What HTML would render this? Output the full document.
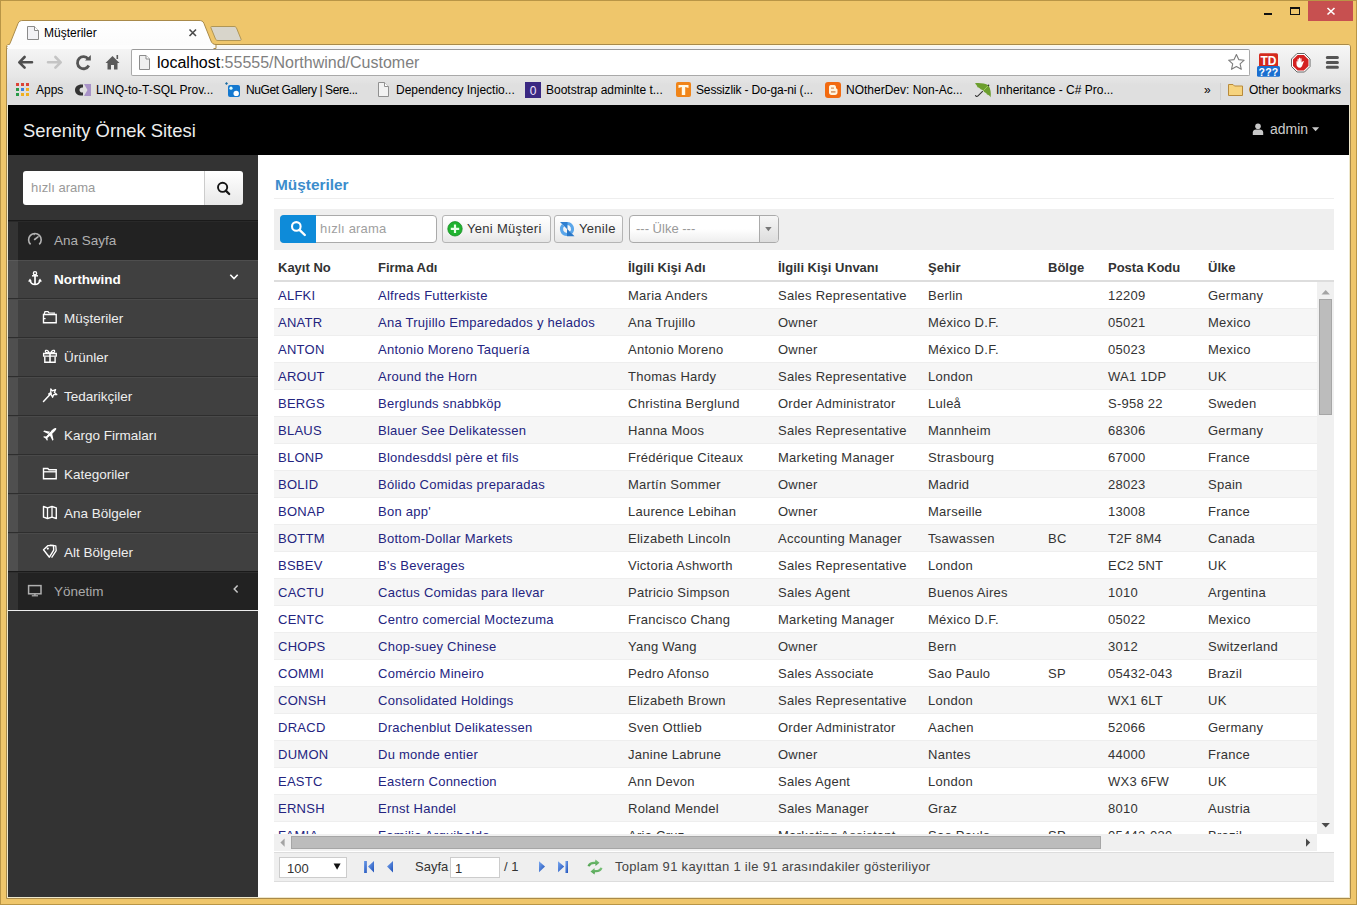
<!DOCTYPE html>
<html><head><meta charset="utf-8"><title>Müşteriler</title>
<style>
*{box-sizing:border-box}
html,body{margin:0;padding:0}
body{width:1357px;height:905px;position:relative;overflow:hidden;background:#EFC66B;font-family:"Liberation Sans",sans-serif;}
.abs{position:absolute}
#outer{position:absolute;left:0;top:0;width:1357px;height:905px;border:1px solid #b99546;}
/* window controls */
#closebtn{position:absolute;left:1308px;top:1px;width:45px;height:20px;background:#C75050;}
/* tabs */
#chrome{position:absolute;left:6px;top:44px;width:1345px;height:855px;border:1px solid #a98a4a;border-radius:3px 3px 0 0;background:#efe8cc;}
#toolbar{position:absolute;left:7px;top:45px;width:1343px;height:60px;background:linear-gradient(#fffbe8 0,#fffbe8 1px,#f6f6f6 1px,#f2f2f2 8px,#e6e6e6 32px,#dfdfdf 40px,#dfdfdf);border-radius:2px 2px 0 0;}
#addr{position:absolute;left:131px;top:49px;width:1119px;height:27px;background:#fff;border:1px solid #a9a9a9;border-top-color:#9a9a9a;border-radius:2px;}
.bm{position:absolute;top:83px;font-size:12px;color:#000;white-space:nowrap;line-height:15px}
/* page */
#page{position:absolute;left:8px;top:105px;width:1341px;height:792px;background:#fff;overflow:hidden}
#header{position:absolute;left:8px;top:105px;width:1341px;height:50px;background:#000}
#sidebar{position:absolute;left:8px;top:155px;width:250px;height:742px;background:#333}
.mi{position:absolute;left:8px;width:250px;height:39px;}
.mi .strip{position:absolute;left:0;top:0;width:10px;height:39px}
.mi .bg{position:absolute;left:10px;top:0;width:240px;height:39px}
.mi .t{position:absolute;top:13px;font-size:13.5px;line-height:16px;white-space:nowrap}
.grp .strip{background:#4f4f4f}
.grp .bg{background:#404040}
.grp .ln{position:absolute;left:0;top:0;width:250px;height:1px;background:#2e2e2e}
.grp .ln2{position:absolute;left:0;top:1px;width:250px;height:1px;background:#4a4a4a}
.top1 .strip{background:#333}
.top1 .bg{background:#222}
/* grid */
#grid{position:absolute;left:274px;top:282px;width:1043px;height:552px;overflow:hidden;}
.row{position:absolute;left:0;width:1043px;height:27px;background:#fff;border-bottom:1px solid #eee}
.row.odd{background:#f6f6f6}
.c{position:absolute;top:6px;font-size:13px;letter-spacing:0.26px;color:#333;white-space:nowrap;line-height:15px}
.lnk{color:#24247f}
.h{position:absolute;top:10px;font-size:13px;font-weight:bold;color:#333;white-space:nowrap;line-height:15px}
</style></head><body>
<div id="outer"></div>
<div id="closebtn"></div>
<div id="chrome"></div>
<div id="toolbar"></div>
<div id="addr"></div>
<svg class="abs" style="left:0;top:0" width="1357" height="105" viewBox="0 0 1357 105">
 <defs>
  <linearGradient id="tabg" x1="0" y1="0" x2="0" y2="1"><stop offset="0" stop-color="#ffffff"/><stop offset="1" stop-color="#fbfbfb"/></linearGradient>
 </defs>
 <!-- active tab -->
 <path d="M6.5 47.5 C9 45 10 44 11 41 L18 23.5 C19 21 20.5 20.5 23 20.5 L199 20.5 C201.5 20.5 203 21 204 23.5 L211 41 C212 43.5 213.5 44.5 216 44.5 L216 48.5 L6.5 48.5 Z" fill="url(#tabg)" stroke="#a98a4a" stroke-width="1"/>
 <rect x="7.5" y="45" width="206" height="4" fill="#fdfdfd"/>
 <!-- new tab button -->
 <path d="M211.5 26.5 L234 26.5 C235.5 26.5 236 27 236.5 28 L241 39 C241.3 40 241 40.5 240 40.5 L218 40.5 C216.5 40.5 216 40 215.5 39 L211 28 C210.7 27 211 26.5 211.5 26.5 Z" fill="#d8d5cb" stroke="#b09656" stroke-width="1"/>
 <!-- tab doc icon -->
 <path d="M27.5 26.5 L34.5 26.5 L38.5 30.5 L38.5 39.5 L27.5 39.5 Z" fill="#f2f2f5" stroke="#8a8a8a" stroke-width="1"/>
 <path d="M34.5 26.5 L34.5 30.5 L38.5 30.5" fill="#fff" stroke="#8a8a8a" stroke-width="1"/>
 <!-- tab close -->
 <path d="M189.5 29.5 L196 36 M196 29.5 L189.5 36" stroke="#4a4a4a" stroke-width="1.6"/>
 <!-- window controls -->
 <rect x="1264" y="13" width="8" height="2" fill="#111"/>
 <rect x="1290.5" y="7.5" width="9" height="7" fill="none" stroke="#111" stroke-width="1"/>
 <rect x="1290" y="7" width="10" height="2" fill="#111"/>
 <path d="M1327.5 8 L1334.5 14.5 M1334.5 8 L1327.5 14.5" stroke="#fff" stroke-width="1.6"/>
 <!-- back / forward -->
 <path d="M32 62.3 L19.5 62.3 M24.6 57 L19.3 62.3 L24.6 67.6" fill="none" stroke="#4e4e4e" stroke-width="2.6" stroke-linecap="round" stroke-linejoin="round"/>
 <path d="M48 62.3 L60.5 62.3 M55.4 57 L60.7 62.3 L55.4 67.6" fill="none" stroke="#c4c4c4" stroke-width="2.6" stroke-linecap="round" stroke-linejoin="round"/>
 <!-- reload -->
 <path d="M88.2 59 A6 6 0 1 0 88.8 65.5" fill="none" stroke="#555" stroke-width="2.8"/>
 <path d="M85 60.5 L90.8 60.5 L90.8 55 Z" fill="#555"/>
 <!-- home -->
 <path d="M105.5 63 L112.5 56 L119.5 63 Z" fill="#5a5a5a"/>
 <path d="M107.5 62 L117.5 62 L117.5 69.5 L114 69.5 L114 65 L111 65 L111 69.5 L107.5 69.5 Z" fill="#5a5a5a"/>
 <rect x="116.5" y="55" width="1.6" height="4" fill="#5a5a5a"/>
 <!-- address doc icon -->
 <path d="M139.5 55.5 L146 55.5 L149.5 59 L149.5 69.5 L139.5 69.5 Z" fill="#f0f0f0" stroke="#8c8c8c" stroke-width="1"/>
 <path d="M146 55.5 L146 59 L149.5 59" fill="#fff" stroke="#8c8c8c" stroke-width="1"/>
 <!-- star -->
 <path d="M1236.4 54.6 L1238.7 59.6 L1244.2 60.2 L1240.1 63.9 L1241.3 69.3 L1236.4 66.5 L1231.5 69.3 L1232.7 63.9 L1228.6 60.2 L1234.1 59.6 Z" fill="#fff" stroke="#7c7c7c" stroke-width="1.1" stroke-linejoin="round"/>
 <!-- TD extension -->
 <rect x="1259" y="53.2" width="19" height="14" rx="1.5" fill="#d42a1e"/>
 <text x="1268.5" y="64.8" font-family="Liberation Sans" font-weight="bold" font-size="12" fill="#fff" text-anchor="middle">TD</text>
 <rect x="1257" y="66" width="23" height="10.8" rx="1.5" fill="#1a6fd0"/>
 <text x="1268.5" y="75.5" font-family="Liberation Sans" font-weight="bold" font-size="10.5" fill="#fff" text-anchor="middle" letter-spacing="0.3">???</text>
 <!-- adblock -->
 <path d="M1297 53.5 L1304.5 53.5 L1310 59 L1310 66.5 L1304.5 72 L1297 72 L1291.5 66.5 L1291.5 59 Z" fill="#fff" stroke="#666" stroke-width="1"/>
 <path d="M1297.6 55 L1303.9 55 L1308.5 59.6 L1308.5 65.9 L1303.9 70.5 L1297.6 70.5 L1293 65.9 L1293 59.6 Z" fill="#d42020"/>
 <path d="M1298.5 67.5 C1297 66.8 1296.5 65.5 1296.5 64 L1296.5 61.8 C1296.5 61.2 1297.3 61.2 1297.4 61.8 L1297.5 62.8 L1297.6 59.2 C1297.7 58.6 1298.6 58.6 1298.7 59.2 L1298.8 62 L1299 58.2 C1299.1 57.6 1300 57.6 1300.1 58.2 L1300.2 62 L1300.4 58.8 C1300.5 58.2 1301.4 58.2 1301.5 58.8 L1301.6 62.5 L1302.8 61.2 C1303.3 60.8 1304 61.2 1303.7 61.8 L1302.5 64.8 C1302 66.5 1301.2 67.6 1300 67.8 Z" fill="#fff"/>
 <!-- menu -->
 <path d="M1327.3 57.4 L1337.4 57.4 M1327.3 62.4 L1337.4 62.4 M1327.3 67.3 L1337.4 67.3" stroke="#555" stroke-width="3" stroke-linecap="round"/>
 <!-- bookmarks icons -->
 <g>
  <rect x="16" y="83" width="3" height="3" fill="#dc4437"/><rect x="21" y="83" width="3" height="3" fill="#dc4437"/><rect x="26" y="83" width="3" height="3" fill="#dc4437"/>
  <rect x="16" y="88" width="3" height="3" fill="#2a9a48"/><rect x="21" y="88" width="3" height="3" fill="#3b82e0"/><rect x="26" y="88" width="3" height="3" fill="#f0b020"/>
  <rect x="16" y="93" width="3" height="3" fill="#2a9a48"/><rect x="21" y="93" width="3" height="3" fill="#f0b020"/><rect x="26" y="93" width="3" height="3" fill="#f0b020"/>
 </g>
 <path d="M83 84.5 C78 84 75 86.5 75 90 C75 93.5 78 96 83 95.5 L83 92.5 C81 92.8 79.5 91.8 79.5 90 C79.5 88.2 81 87.2 83 87.5 Z" fill="#333"/>
 <path d="M84 84 L91 84 L91 96 L84 96 L87.5 90 Z" fill="#a993c8"/>
 <rect x="228" y="85" width="12" height="12" rx="2" fill="#1478cf"/>
 <circle cx="231" cy="88.2" r="1.6" fill="#dff"/>
 <circle cx="236.2" cy="93.4" r="2.7" fill="#fff"/>
 <path d="M226.5 82 L228 83.5 L226.5 85 L225 83.5 Z" fill="#1a6aa0"/>
 <path d="M378.5 82.5 L384.5 82.5 L388.5 86.5 L388.5 96.5 L378.5 96.5 Z" fill="#f2f2f2" stroke="#909090" stroke-width="1"/>
 <path d="M384.5 82.5 L384.5 86.5 L388.5 86.5" fill="#fff" stroke="#909090" stroke-width="1"/>
 <rect x="525" y="82" width="16" height="16" fill="#3a2882"/>
 <text x="533" y="94.5" font-family="Liberation Sans" font-size="12" fill="#f0e6ff" text-anchor="middle">0</text>
 <rect x="676" y="82" width="15" height="15" rx="2" fill="#f08418"/>
 <path d="M678.5 85 L688.5 85 L688.5 88 L685.2 87 L685.2 95 L681.8 95 L681.8 87 L678.5 88 Z" fill="#fff9e6"/>
 <rect x="825" y="82" width="16" height="16" rx="3" fill="#f26a10"/>
 <path d="M829 87 C829 85.5 830 85 831.5 85 L834 85 C835.5 85 836 86 836 87.5 L836 88.5 C837 88.5 837.5 89 837.5 90 L837.5 92.5 C837.5 94 836.5 95 835 95 L831.5 95 C830 95 829 94 829 92.5 Z" fill="#fff5e0"/>
 <rect x="831" y="87.6" width="3" height="1" fill="#c87a40"/><rect x="831" y="91.3" width="4.5" height="1.2" fill="#c87a40"/>
 <path d="M975 83.2 C979 82.6 985 83.2 988.5 85.4 C990.5 88.5 991.3 93 990.6 97.2 C989.5 95.5 988.2 95 987 94.6 C986.5 93 985.5 92.5 984.2 92 C983.5 90.5 982.5 90 981 89.6 C980 88 978.8 87.5 977.5 87.2 C977 85.5 976 84.5 975 83.2 Z" fill="#6c9e2e"/>
 <path d="M988.5 85.4 L983.5 90.5" stroke="#9fd060" stroke-width="0.9"/>
 <circle cx="988.5" cy="85.4" r="0.8" fill="#333"/>
 <path d="M982.8 91.2 L978 95.8 C977 96.8 975.6 96.6 975.4 95.2" fill="none" stroke="#333" stroke-width="1.1"/>
 <!-- bookmarks separator + folder -->
 <rect x="1220" y="83" width="1" height="17" fill="#cfcfcf"/>
 <path d="M1228.5 84.5 L1233 84.5 L1234.5 86 L1242.5 86 L1242.5 95.5 L1228.5 95.5 Z" fill="#f6d37e" stroke="#b88a3a" stroke-width="1"/>
</svg>
<div class="abs" style="left:157px;top:53px;font-size:16px;line-height:19px;color:#808080;white-space:nowrap"><span style="color:#000">localhost</span>:55555/Northwind/Customer</div>

<div class="abs" style="left:44px;top:26px;font-size:12px;line-height:15px;color:#000;white-space:nowrap">Müşteriler</div>
<div class="bm" style="left:36px">Apps</div>
<div class="bm" style="left:96px">LINQ-to-T-SQL Prov...</div>
<div class="bm" style="left:246px;letter-spacing:-0.42px">NuGet Gallery | Sere...</div>
<div class="bm" style="left:396px">Dependency Injectio...</div>
<div class="bm" style="left:546px">Bootstrap adminlte t...</div>
<div class="bm" style="left:696px;letter-spacing:-0.15px">Sessizlik - Do-ga-ni (...</div>
<div class="bm" style="left:846px">NOtherDev: Non-Ac...</div>
<div class="bm" style="left:996px">Inheritance - C# Pro...</div>
<div class="bm" style="left:1204px">»</div>
<div class="bm" style="left:1249px">Other bookmarks</div>

<div id="page"></div>
<div id="header"></div>
<div class="abs" style="left:23px;top:120px;font-size:18.4px;line-height:21px;color:#eee;white-space:nowrap">Serenity Örnek Sitesi</div>
<div class="abs" style="left:1270px;top:121px;font-size:14px;line-height:16px;color:#ccc;white-space:nowrap">admin</div>

<div id="sidebar"></div>
<div class="abs" style="left:23px;top:171px;width:182px;height:34px;background:#fff;border-radius:3px 0 0 3px"></div>
<div class="abs" style="left:204px;top:171px;width:39px;height:34px;background:linear-gradient(#fff,#e8e8e8);border-left:1px solid #ccc;border-radius:0 3px 3px 0"></div>
<div class="abs" style="left:31px;top:180px;font-size:13px;line-height:16px;color:#999;white-space:nowrap">hızlı arama</div>

<div class="mi top1" style="top:220px"><div class="strip"></div><div class="bg"></div><div class="abs" style="left:0;top:0;width:250px;height:1px;background:#1a1a1a"></div><div class="abs" style="left:0;top:1px;width:250px;height:1px;background:#292929"></div><span class="t" style="left:46px;color:#b0b0b0">Ana Sayfa</span></div>
<div class="mi grp" style="top:259px"><div class="strip"></div><div class="bg"></div><div class="ln" style="background:linear-gradient(90deg,#333 10px,#222 10px)"></div><div class="ln2" style="background:linear-gradient(90deg,#5a5a5a 10px,#4e4e4e 10px)"></div><span class="t" style="left:46px;color:#fff;font-weight:bold">Northwind</span></div>
<div class="mi grp" style="top:298px"><div class="strip"></div><div class="bg"></div><div class="ln"></div><div class="ln2"></div><span class="t" style="left:56px;color:#eee">Müşteriler</span></div>
<div class="mi grp" style="top:337px"><div class="strip"></div><div class="bg"></div><div class="ln"></div><div class="ln2"></div><span class="t" style="left:56px;color:#eee">Ürünler</span></div>
<div class="mi grp" style="top:376px"><div class="strip"></div><div class="bg"></div><div class="ln"></div><div class="ln2"></div><span class="t" style="left:56px;color:#eee">Tedarikçiler</span></div>
<div class="mi grp" style="top:415px"><div class="strip"></div><div class="bg"></div><div class="ln"></div><div class="ln2"></div><span class="t" style="left:56px;color:#eee">Kargo Firmaları</span></div>
<div class="mi grp" style="top:454px"><div class="strip"></div><div class="bg"></div><div class="ln"></div><div class="ln2"></div><span class="t" style="left:56px;color:#eee">Kategoriler</span></div>
<div class="mi grp" style="top:493px"><div class="strip"></div><div class="bg"></div><div class="ln"></div><div class="ln2"></div><span class="t" style="left:56px;color:#eee">Ana Bölgeler</span></div>
<div class="mi grp" style="top:532px"><div class="strip"></div><div class="bg"></div><div class="ln"></div><div class="ln2"></div><span class="t" style="left:56px;color:#eee">Alt Bölgeler</span></div>
<div class="mi top1" style="top:571px"><div class="strip"></div><div class="bg"></div><div class="abs" style="left:0;top:0;width:250px;height:1px;background:#1a1a1a"></div><div class="abs" style="left:0;top:1px;width:250px;height:1px;background:#2e2e2e"></div><span class="t" style="left:46px;color:#aaa">Yönetim</span></div>
<div class="abs" style="left:8px;top:610px;width:250px;height:1px;background:#eee"></div>
<svg class="abs" style="left:0;top:105px" width="260" height="520" viewBox="0 105 260 520">
 <!-- sidebar search icon -->
 <circle cx="222.6" cy="187.3" r="4.6" fill="none" stroke="#151515" stroke-width="1.9"/>
 <path d="M225.8 190.6 L229.2 194" stroke="#151515" stroke-width="2.2" stroke-linecap="round"/>
 <!-- dashboard -->
 <path d="M30.6 244.4 A6.3 6.3 0 1 1 39.2 244.4" fill="none" stroke="#b4b4b4" stroke-width="1.6"/>
 <path d="M34.6 239.5 L38 236.8" stroke="#b4b4b4" stroke-width="1.6" stroke-linecap="round"/>
 <rect x="33.6" y="233.6" width="1.2" height="1.6" fill="#b4b4b4"/>
 <!-- anchor -->
 <circle cx="35" cy="273.2" r="1.6" fill="none" stroke="#fff" stroke-width="1.4"/>
 <path d="M32 275.8 L38 275.8" stroke="#fff" stroke-width="1.5"/>
 <path d="M35 275 L35 284.3" stroke="#fff" stroke-width="1.7"/>
 <path d="M29.5 280 C30.5 283 32.5 284.5 35 284.5 C37.5 284.5 39.5 283 40.5 280" fill="none" stroke="#fff" stroke-width="1.5"/>
 <path d="M28 281.5 L30 278.4 L32 281.5 Z M38 281.5 L40 278.4 L42 281.5 Z" fill="#fff"/>
 <!-- chevron down -->
 <path d="M230.3 274.8 L234 278.5 L237.7 274.8" fill="none" stroke="#fff" stroke-width="1.6"/>
 <!-- folder-open-o (Musteriler) -->
 <path d="M43.5 314.5 L43.5 322.8 L56.2 322.8 L56.2 314.5 Z" fill="none" stroke="#fff" stroke-width="1.4"/>
 <path d="M44.2 314 L45 311.6 L48 311.6 L49 312.8 L55 313.2" fill="none" stroke="#fff" stroke-width="1.3"/>
 <rect x="44" y="318" width="1.6" height="1.2" fill="#fff"/>
 <!-- gift -->
 <path d="M43.6 353.5 L56.3 353.5 L56.3 356.2 L43.6 356.2 Z" fill="none" stroke="#fff" stroke-width="1.3"/>
 <path d="M44.8 356.5 L44.8 362.2 L55.1 362.2 L55.1 356.5" fill="none" stroke="#fff" stroke-width="1.4"/>
 <rect x="49.2" y="353" width="1.6" height="9.5" fill="#fff"/>
 <path d="M49.5 353 C48 350 45.5 349.5 45.3 351.2 C45.2 352.5 47.5 353 49.5 353 M50.5 353 C52 350 54.5 349.5 54.7 351.2 C54.8 352.5 52.5 353 50.5 353" fill="none" stroke="#fff" stroke-width="1.2"/>
 <!-- magic wand -->
 <path d="M43.5 401.5 L51.2 393.2" stroke="#fff" stroke-width="1.5" stroke-linecap="round"/>
 <path d="M50.8 388.8 L52.5 390.8 L55.6 389.6 L54.4 392.6 L56.8 394.6 L53.6 394.7 L52.6 397.3 L51.2 394.6 L48.6 394 L50.8 392.5 Z" fill="none" stroke="#fff" stroke-width="1.3" stroke-linejoin="round"/>
 <!-- plane -->
 <path d="M56.2 428.2 C55 427.7 53.8 428.3 52.6 429.5 L50.2 431.8 L44.2 430.5 L43.2 431.5 L48.3 434 L46 436.6 L44 436.2 L43.2 437 L45.6 438.4 L47 440.8 L47.8 440 L47.4 438 L50 435.7 L52.5 440.8 L53.5 439.8 L52.2 433.8 L54.5 431.4 C55.7 430.2 56.7 429.2 56.2 428.2 Z" fill="#fff"/>
 <path d="M46 436 L51.5 430.5" stroke="#404040" stroke-width="0.9" stroke-dasharray="1 1"/>
 <!-- folder-o (Kategoriler) -->
 <path d="M43.5 468.5 L47.8 468.5 L49 469.8 L56.2 469.8 L56.2 478.7 L43.5 478.7 Z" fill="none" stroke="#fff" stroke-width="1.4"/>
 <path d="M43.8 471.8 L56 471.8" stroke="#fff" stroke-width="1.3"/>
 <!-- map-o -->
 <path d="M43.5 506.5 L47.5 507.8 L52 506.5 L56.3 507.8 L56.3 518.5 L52 517.2 L47.5 518.5 L43.5 517.2 Z" fill="none" stroke="#fff" stroke-width="1.4" stroke-linejoin="round"/>
 <path d="M47.5 508 L47.5 518.2 M52 506.8 L52 517" stroke="#fff" stroke-width="1.3"/>
 <!-- tags / tag -->
 <path d="M43.5 549.8 L48 545.6 L53.5 545.4 L53.7 550.2 L49.4 557.2 Z" fill="none" stroke="#fff" stroke-width="1.4" stroke-linejoin="round"/>
 <path d="M49.8 545.2 L55.8 545.8 L56.2 550.6 L51.6 557.6" fill="none" stroke="#fff" stroke-width="1.3" stroke-linejoin="round"/>
 <circle cx="47.8" cy="548.6" r="1.1" fill="#fff"/>
 <!-- desktop -->
 <rect x="28.6" y="585.6" width="12.4" height="8.2" fill="none" stroke="#b0b0b0" stroke-width="1.5"/>
 <rect x="34.2" y="593.8" width="1.4" height="1.8" fill="#b0b0b0"/>
 <rect x="31.8" y="595.2" width="6.2" height="1.2" fill="#b0b0b0"/>
 <!-- chevron left -->
 <path d="M237.6 585.4 L234.2 588.9 L237.6 592.4" fill="none" stroke="#c8c8c8" stroke-width="1.5"/>
</svg>
<svg class="abs" style="left:1245px;top:118px" width="80" height="22" viewBox="1245 118 80 22">
 <circle cx="1258" cy="126.2" r="2.8" fill="#c8c8c8"/>
 <path d="M1252.8 135 L1252.8 132.6 C1252.8 130.5 1254.3 129.6 1256 129.6 L1260 129.6 C1261.7 129.6 1263.2 130.5 1263.2 132.6 L1263.2 135 Z" fill="#c8c8c8"/>
 <path d="M1312 127.3 L1319.2 127.3 L1315.6 131.3 Z" fill="#c8c8c8"/>
</svg>

<!-- content -->
<div class="abs" style="left:275px;top:176px;font-size:15.4px;font-weight:bold;line-height:18px;color:#3c8dcc;white-space:nowrap">Müşteriler</div>
<div class="abs" style="left:274px;top:198px;width:1060px;height:1px;background:#eee"></div>
<div class="abs" style="left:274px;top:209px;width:1060px;height:41px;background:#efefef"></div>

<!-- quick search -->
<div class="abs" style="left:280px;top:215px;width:157px;height:28px;background:#fff;border:1px solid #aaa;border-radius:4px"></div>
<div class="abs" style="left:280px;top:215px;width:36px;height:28px;background:#0e8bd9;border-radius:4px 0 0 4px"></div>
<div class="abs" style="left:320px;top:221px;font-size:13px;line-height:16px;color:#a0a0a0;white-space:nowrap;letter-spacing:0.2px">hızlı arama</div>
<!-- buttons -->
<div class="abs" style="left:442px;top:215px;width:109px;height:28px;background:linear-gradient(#fff,#f3f3f3 60%,#e6e6e6);border:1px solid #b5b5b5;border-radius:3px"></div>
<div class="abs" style="left:467px;top:221px;font-size:13px;line-height:16px;color:#333;white-space:nowrap;letter-spacing:0.3px">Yeni Müşteri</div>
<div class="abs" style="left:554px;top:215px;width:69px;height:28px;background:linear-gradient(#fff,#f3f3f3 60%,#e6e6e6);border:1px solid #b5b5b5;border-radius:3px"></div>
<div class="abs" style="left:579px;top:221px;font-size:13px;line-height:16px;color:#333;white-space:nowrap;letter-spacing:0.3px">Yenile</div>
<div class="abs" style="left:629px;top:215px;width:150px;height:28px;background:linear-gradient(#fff,#fff 50%,#eee);border:1px solid #aaa;border-radius:4px"></div>
<div class="abs" style="left:759px;top:216px;width:19px;height:26px;background:linear-gradient(#f6f6f6,#ddd);border-left:1px solid #aaa;border-radius:0 3px 3px 0"></div>
<div class="abs" style="left:636px;top:221px;font-size:13px;line-height:16px;color:#999;white-space:nowrap">--- Ülke ---</div>
<svg class="abs" style="left:270px;top:210px" width="520" height="40" viewBox="270 210 520 40">
 <circle cx="296.3" cy="226.4" r="4.3" fill="none" stroke="#fff" stroke-width="2.1"/>
 <path d="M299.5 229.8 L304.8 235" stroke="#fff" stroke-width="2.4" stroke-linecap="round"/>
 <circle cx="455" cy="228.8" r="7.2" fill="#1fb32f"/>
 <circle cx="455" cy="228.8" r="7.2" fill="none" stroke="#178a25" stroke-width="0.8"/>
 <path d="M455 224.5 L455 233 M450.8 228.8 L459.2 228.8" stroke="#eaffea" stroke-width="2.2"/>
 <path d="M563.1 225.1 A5.5 5.5 0 0 0 567 234.5" fill="none" stroke="#5aa6ea" stroke-width="3"/>
 <path d="M570.9 232.9 A5.5 5.5 0 0 0 567 223.5" fill="none" stroke="#5aa6ea" stroke-width="3"/>
 <path d="M560 222 L567.5 222 L567.5 229.5 Z" fill="#2f7fd0"/>
 <path d="M574.5 236.2 L567 236.2 L567 228.7 Z" fill="#2a78c8"/>
 <path d="M765.2 227 L771.6 227 L768.4 231.2 Z" fill="#777"/>
</svg>
<div class="abs" style="left:274px;top:250px;width:1060px;height:30px"><span class="h" style="left:4px">Kayıt No</span><span class="h" style="left:104px">Firma Adı</span><span class="h" style="left:354px">İlgili Kişi Adı</span><span class="h" style="left:504px">İlgili Kişi Unvanı</span><span class="h" style="left:654px">Şehir</span><span class="h" style="left:774px">Bölge</span><span class="h" style="left:834px">Posta Kodu</span><span class="h" style="left:934px">Ülke</span></div>
<div class="abs" style="left:274px;top:280px;width:1060px;height:2px;background:#ddd"></div>
<div id="grid">
<div class="row" style="top:0px"><span class="c lnk" style="left:4px">ALFKI</span><span class="c lnk" style="left:104px">Alfreds Futterkiste</span><span class="c" style="left:354px">Maria Anders</span><span class="c" style="left:504px">Sales Representative</span><span class="c" style="left:654px">Berlin</span><span class="c" style="left:834px">12209</span><span class="c" style="left:934px">Germany</span></div>
<div class="row odd" style="top:27px"><span class="c lnk" style="left:4px">ANATR</span><span class="c lnk" style="left:104px">Ana Trujillo Emparedados y helados</span><span class="c" style="left:354px">Ana Trujillo</span><span class="c" style="left:504px">Owner</span><span class="c" style="left:654px">México D.F.</span><span class="c" style="left:834px">05021</span><span class="c" style="left:934px">Mexico</span></div>
<div class="row" style="top:54px"><span class="c lnk" style="left:4px">ANTON</span><span class="c lnk" style="left:104px">Antonio Moreno Taquería</span><span class="c" style="left:354px">Antonio Moreno</span><span class="c" style="left:504px">Owner</span><span class="c" style="left:654px">México D.F.</span><span class="c" style="left:834px">05023</span><span class="c" style="left:934px">Mexico</span></div>
<div class="row odd" style="top:81px"><span class="c lnk" style="left:4px">AROUT</span><span class="c lnk" style="left:104px">Around the Horn</span><span class="c" style="left:354px">Thomas Hardy</span><span class="c" style="left:504px">Sales Representative</span><span class="c" style="left:654px">London</span><span class="c" style="left:834px">WA1 1DP</span><span class="c" style="left:934px">UK</span></div>
<div class="row" style="top:108px"><span class="c lnk" style="left:4px">BERGS</span><span class="c lnk" style="left:104px">Berglunds snabbköp</span><span class="c" style="left:354px">Christina Berglund</span><span class="c" style="left:504px">Order Administrator</span><span class="c" style="left:654px">Luleå</span><span class="c" style="left:834px">S-958 22</span><span class="c" style="left:934px">Sweden</span></div>
<div class="row odd" style="top:135px"><span class="c lnk" style="left:4px">BLAUS</span><span class="c lnk" style="left:104px">Blauer See Delikatessen</span><span class="c" style="left:354px">Hanna Moos</span><span class="c" style="left:504px">Sales Representative</span><span class="c" style="left:654px">Mannheim</span><span class="c" style="left:834px">68306</span><span class="c" style="left:934px">Germany</span></div>
<div class="row" style="top:162px"><span class="c lnk" style="left:4px">BLONP</span><span class="c lnk" style="left:104px">Blondesddsl père et fils</span><span class="c" style="left:354px">Frédérique Citeaux</span><span class="c" style="left:504px">Marketing Manager</span><span class="c" style="left:654px">Strasbourg</span><span class="c" style="left:834px">67000</span><span class="c" style="left:934px">France</span></div>
<div class="row odd" style="top:189px"><span class="c lnk" style="left:4px">BOLID</span><span class="c lnk" style="left:104px">Bólido Comidas preparadas</span><span class="c" style="left:354px">Martín Sommer</span><span class="c" style="left:504px">Owner</span><span class="c" style="left:654px">Madrid</span><span class="c" style="left:834px">28023</span><span class="c" style="left:934px">Spain</span></div>
<div class="row" style="top:216px"><span class="c lnk" style="left:4px">BONAP</span><span class="c lnk" style="left:104px">Bon app&#39;</span><span class="c" style="left:354px">Laurence Lebihan</span><span class="c" style="left:504px">Owner</span><span class="c" style="left:654px">Marseille</span><span class="c" style="left:834px">13008</span><span class="c" style="left:934px">France</span></div>
<div class="row odd" style="top:243px"><span class="c lnk" style="left:4px">BOTTM</span><span class="c lnk" style="left:104px">Bottom-Dollar Markets</span><span class="c" style="left:354px">Elizabeth Lincoln</span><span class="c" style="left:504px">Accounting Manager</span><span class="c" style="left:654px">Tsawassen</span><span class="c" style="left:774px">BC</span><span class="c" style="left:834px">T2F 8M4</span><span class="c" style="left:934px">Canada</span></div>
<div class="row" style="top:270px"><span class="c lnk" style="left:4px">BSBEV</span><span class="c lnk" style="left:104px">B&#39;s Beverages</span><span class="c" style="left:354px">Victoria Ashworth</span><span class="c" style="left:504px">Sales Representative</span><span class="c" style="left:654px">London</span><span class="c" style="left:834px">EC2 5NT</span><span class="c" style="left:934px">UK</span></div>
<div class="row odd" style="top:297px"><span class="c lnk" style="left:4px">CACTU</span><span class="c lnk" style="left:104px">Cactus Comidas para llevar</span><span class="c" style="left:354px">Patricio Simpson</span><span class="c" style="left:504px">Sales Agent</span><span class="c" style="left:654px">Buenos Aires</span><span class="c" style="left:834px">1010</span><span class="c" style="left:934px">Argentina</span></div>
<div class="row" style="top:324px"><span class="c lnk" style="left:4px">CENTC</span><span class="c lnk" style="left:104px">Centro comercial Moctezuma</span><span class="c" style="left:354px">Francisco Chang</span><span class="c" style="left:504px">Marketing Manager</span><span class="c" style="left:654px">México D.F.</span><span class="c" style="left:834px">05022</span><span class="c" style="left:934px">Mexico</span></div>
<div class="row odd" style="top:351px"><span class="c lnk" style="left:4px">CHOPS</span><span class="c lnk" style="left:104px">Chop-suey Chinese</span><span class="c" style="left:354px">Yang Wang</span><span class="c" style="left:504px">Owner</span><span class="c" style="left:654px">Bern</span><span class="c" style="left:834px">3012</span><span class="c" style="left:934px">Switzerland</span></div>
<div class="row" style="top:378px"><span class="c lnk" style="left:4px">COMMI</span><span class="c lnk" style="left:104px">Comércio Mineiro</span><span class="c" style="left:354px">Pedro Afonso</span><span class="c" style="left:504px">Sales Associate</span><span class="c" style="left:654px">Sao Paulo</span><span class="c" style="left:774px">SP</span><span class="c" style="left:834px">05432-043</span><span class="c" style="left:934px">Brazil</span></div>
<div class="row odd" style="top:405px"><span class="c lnk" style="left:4px">CONSH</span><span class="c lnk" style="left:104px">Consolidated Holdings</span><span class="c" style="left:354px">Elizabeth Brown</span><span class="c" style="left:504px">Sales Representative</span><span class="c" style="left:654px">London</span><span class="c" style="left:834px">WX1 6LT</span><span class="c" style="left:934px">UK</span></div>
<div class="row" style="top:432px"><span class="c lnk" style="left:4px">DRACD</span><span class="c lnk" style="left:104px">Drachenblut Delikatessen</span><span class="c" style="left:354px">Sven Ottlieb</span><span class="c" style="left:504px">Order Administrator</span><span class="c" style="left:654px">Aachen</span><span class="c" style="left:834px">52066</span><span class="c" style="left:934px">Germany</span></div>
<div class="row odd" style="top:459px"><span class="c lnk" style="left:4px">DUMON</span><span class="c lnk" style="left:104px">Du monde entier</span><span class="c" style="left:354px">Janine Labrune</span><span class="c" style="left:504px">Owner</span><span class="c" style="left:654px">Nantes</span><span class="c" style="left:834px">44000</span><span class="c" style="left:934px">France</span></div>
<div class="row" style="top:486px"><span class="c lnk" style="left:4px">EASTC</span><span class="c lnk" style="left:104px">Eastern Connection</span><span class="c" style="left:354px">Ann Devon</span><span class="c" style="left:504px">Sales Agent</span><span class="c" style="left:654px">London</span><span class="c" style="left:834px">WX3 6FW</span><span class="c" style="left:934px">UK</span></div>
<div class="row odd" style="top:513px"><span class="c lnk" style="left:4px">ERNSH</span><span class="c lnk" style="left:104px">Ernst Handel</span><span class="c" style="left:354px">Roland Mendel</span><span class="c" style="left:504px">Sales Manager</span><span class="c" style="left:654px">Graz</span><span class="c" style="left:834px">8010</span><span class="c" style="left:934px">Austria</span></div>
<div class="row" style="top:540px"><span class="c lnk" style="left:4px">FAMIA</span><span class="c lnk" style="left:104px">Familia Arquibaldo</span><span class="c" style="left:354px">Aria Cruz</span><span class="c" style="left:504px">Marketing Assistant</span><span class="c" style="left:654px">Sao Paulo</span><span class="c" style="left:774px">SP</span><span class="c" style="left:834px">05442-030</span><span class="c" style="left:934px">Brazil</span></div>
</div>
<div class="abs" style="left:1317px;top:282px;width:17px;height:552px;background:#f0f0f0"></div>
<div class="abs" style="left:1319px;top:299px;width:13px;height:116px;background:#bcbcbc;border:1px solid #a6a6a6"></div>
<div class="abs" style="left:274px;top:834px;width:1043px;height:17px;background:#f0f0f0"></div>
<div class="abs" style="left:291px;top:836px;width:810px;height:13px;background:#bcbcbc;border:1px solid #a6a6a6"></div>
<div class="abs" style="left:274px;top:852px;width:1060px;height:30px;background:#efefef;border-top:1px solid #ddd;border-bottom:1px solid #ddd"></div>
<div class="abs" style="left:279px;top:857px;width:68px;height:21px;background:#fff;border:1px solid #ccc"></div>
<div class="abs" style="left:287px;top:861px;font-size:13px;line-height:15px;color:#333">100</div>
<div class="abs" style="left:415px;top:859px;font-size:13px;line-height:15px;color:#333">Sayfa</div>
<div class="abs" style="left:450px;top:857px;width:50px;height:21px;background:#fff;border:1px solid #ccc"></div>
<div class="abs" style="left:455px;top:861px;font-size:13px;line-height:15px;color:#333">1</div>
<div class="abs" style="left:504px;top:859px;font-size:13px;line-height:15px;color:#333">/ 1</div>
<svg class="abs" style="left:270px;top:280px" width="1070" height="600" viewBox="270 280 1070 600">
 <path d="M1321.5 294.5 L1325.7 290 L1329.9 294.5 Z" fill="#a3a3a3"/>
 <path d="M1321.5 823 L1325.7 827.4 L1329.9 823 Z" fill="#4a4a4a"/>
 <path d="M284.6 838.4 L280.4 842.6 L284.6 846.8 Z" fill="#a3a3a3"/>
 <path d="M1306 838.4 L1310.2 842.6 L1306 846.8 Z" fill="#4a4a4a"/>
 <path d="M333.6 863.6 L340.6 863.6 L337.1 869.8 Z" fill="#111"/>
 <defs><linearGradient id="bl" x1="0" y1="0" x2="1" y2="1"><stop offset="0" stop-color="#7aa8f0"/><stop offset="1" stop-color="#1d4fb8"/></linearGradient>
 <linearGradient id="gr" x1="0" y1="0" x2="0" y2="1"><stop offset="0" stop-color="#7cc47c"/><stop offset="1" stop-color="#4ea04e"/></linearGradient></defs>
 <rect x="364" y="861" width="2.8" height="12" fill="url(#bl)"/>
 <path d="M374 861 L374 872.5 L368 866.6 Z" fill="url(#bl)"/>
 <path d="M393 861 L393 872.5 L387 866.6 Z" fill="url(#bl)"/>
 <path d="M539 861.2 L539 872.2 L545 866.6 Z" fill="url(#bl)"/>
 <path d="M558 861.2 L558 872.2 L564.2 866.6 Z" fill="url(#bl)"/>
 <rect x="565.4" y="861" width="2.6" height="12" fill="url(#bl)"/>
 <path d="M587.5 866 C588.5 862.5 591.5 861.5 595 861.8 L595.5 859.6 L599.5 862.8 L595.5 866 L595.3 864 C592.5 863.8 590.5 864.5 589.8 866.5 Z" fill="url(#gr)"/>
 <path d="M602.5 868 C601.5 871.5 598.5 872.5 595 872.2 L594.5 874.6 L590.5 871.4 L594.5 868 L594.7 870 C597.5 870.2 599.5 869.5 600.2 867.5 Z" fill="url(#gr)"/>
</svg>
<div class="abs" style="left:615px;top:859px;font-size:13px;letter-spacing:0.3px;line-height:15px;color:#444;white-space:nowrap">Toplam 91 kayıttan 1 ile 91 arasındakiler gösteriliyor</div>
</body></html>
